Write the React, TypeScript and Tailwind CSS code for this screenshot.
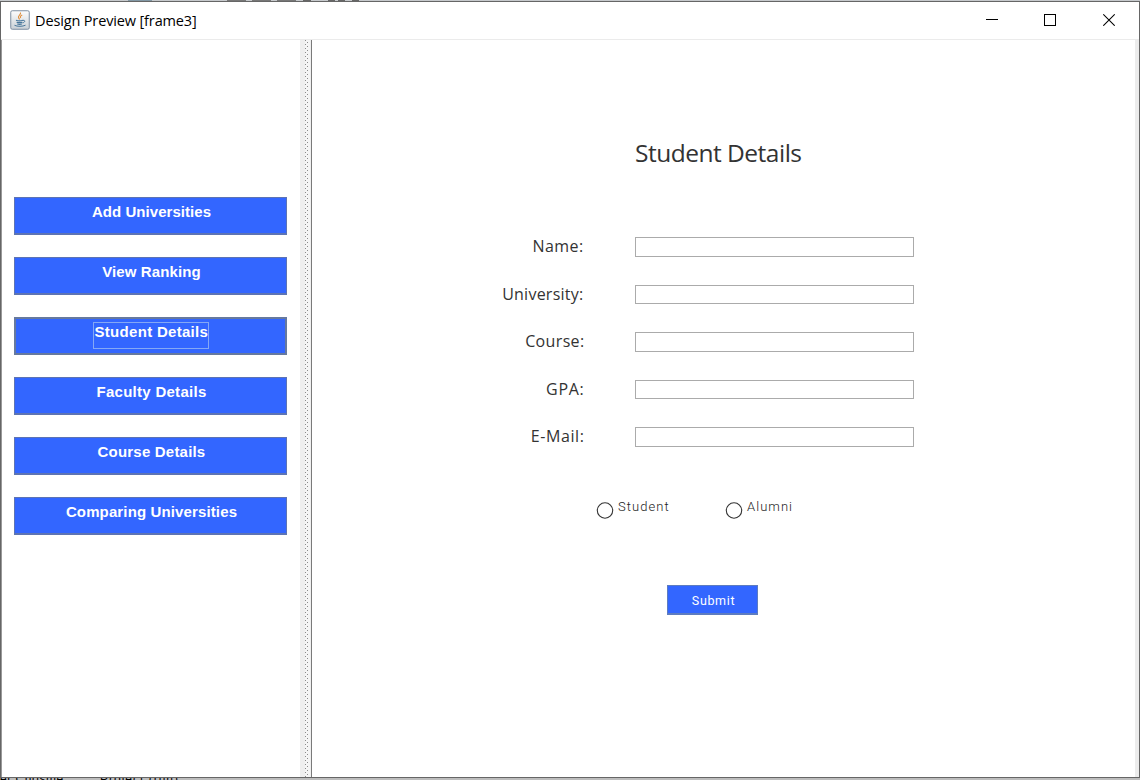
import React from "react";

type NavItem = { label: string; tracking: string; focused?: boolean };

const navItems: NavItem[] = [
  { label: "Add Universities", tracking: "tracking-[0.05px]" },
  { label: "View Ranking", tracking: "tracking-[0.12px]" },
  { label: "Student Details", tracking: "tracking-[0.3px]", focused: true },
  { label: "Faculty Details", tracking: "tracking-[0.28px]" },
  { label: "Course Details", tracking: "tracking-[0.2px]" },
  { label: "Comparing Universities", tracking: "tracking-[0.13px]" },
];

const fields = [
  { label: "Name:", height: "h-5", pad: "pr-[51.5px]", tracking: "tracking-[0.4px]" },
  { label: "University:", height: "h-[19px]", pad: "pr-[51.5px]", tracking: "tracking-[0.25px]" },
  { label: "Course:", height: "h-5", pad: "pr-[50.5px]", tracking: "tracking-[0.35px]" },
  { label: "GPA:", height: "h-[19px]", pad: "pr-[50.5px]", tracking: "tracking-[0.7px]" },
  { label: "E-Mail:", height: "h-5", pad: "pr-[50.5px]", tracking: "tracking-[0.6px]" },
];

function JavaIcon() {
  return (
    <svg width="20" height="20" viewBox="0 0 20 20" fill="none">
      <defs>
        <linearGradient id="tile" x1="0" y1="0" x2="0" y2="1">
          <stop offset="0" stopColor="#fdfdfd" />
          <stop offset="1" stopColor="#c9d0d6" />
        </linearGradient>
      </defs>
      <rect x="0.75" y="0.75" width="18.5" height="18.5" rx="1.5" fill="url(#tile)" stroke="#7d8ea1" />
      <path d="M10.4 2.5c1.2 2-2.8 3-1.9 5 .3.8 1 1.200 1 2M12.200 5c-1.600.8-2.400 1.700-1.500 3" stroke="#e0903f" strokeWidth="1.100" />
      <path d="M6 10.200c2 .7 5 .7 7 0M6.600 12.200c2 .6 4.200.6 5.800 0M7.200 14c1.600.5 3.400.5 4.600 0" stroke="#47769b" strokeWidth="1.200" />
      <path d="M13 10.300c2.600-.3 2.200 2-.4 2.600M4.500 15.300c2.800 1.400 8.200 1.300 11-.1" stroke="#47769b" strokeWidth="1" />
    </svg>
  );
}

function TitleBar() {
  return (
    <header className="flex h-[38px] shrink-0 items-center border-b border-[#ebebeb] bg-white">
      <span className="-mt-px ml-[9px]">
        <JavaIcon />
      </span>
      <h1 className="mt-px ml-[5px] font-['Open_Sans','Noto_Sans',sans-serif] text-[14.5px] tracking-[-0.14px] whitespace-nowrap text-black">
        Design Preview [frame3]
      </h1>
      <div className="-mt-[2px] mr-[24px] ml-auto flex items-center">
        <svg width="13" height="13" viewBox="0 0 13 13" shapeRendering="crispEdges">
          <path d="M0 6.500h12" stroke="#000" />
        </svg>
        <svg className="ml-[45px]" width="12" height="13" viewBox="0 0 12 13" shapeRendering="crispEdges">
          <rect x="0.5" y="1.500" width="11" height="11" fill="none" stroke="#000" />
        </svg>
        <svg className="ml-[47px]" width="12" height="13" viewBox="0 0 12 13">
          <path d="M.3 1.300l11.400 11.400M11.700 1.300L.3 12.700" stroke="#000" strokeWidth="1.100" />
        </svg>
      </div>
    </header>
  );
}

function NavButton({ item }: { item: NavItem }) {
  return (
    <button
      className={
        item.focused
          ? "flex h-[38px] w-[273px] items-start justify-center border-2 border-[#66799f] bg-[#3366ff] pt-[3px]"
          : "flex h-[38px] w-[273px] items-start justify-center border border-b-2 border-[#5d74b4] bg-[#3366ff] pt-1 pl-[2px]"
      }
    >
      <span
        className={`flex h-[27px] items-start border font-['Liberation_Sans',sans-serif] text-[15px] leading-[18px] font-bold whitespace-nowrap text-white ${item.tracking} ${
          item.focused ? "w-[116px] justify-start border-[#85a8f5] pl-[1px]" : "justify-center border-transparent"
        }`}
      >
        {item.label}
      </span>
    </button>
  );
}

function Divider() {
  return (
    <div className="flex w-3 shrink-0 border-r border-[#7a7a7a] bg-[#efefef]">
      <svg className="ml-[5px] h-full w-[5px]" shapeRendering="crispEdges">
        <defs>
          <pattern id="grip" width="5" height="4" patternUnits="userSpaceOnUse">
            <rect width="5" height="4" fill="#f5f5f5" />
            <rect x="0" y="0" width="1" height="1" fill="#8c8c8c" />
            <rect x="2" y="2" width="1" height="1" fill="#8c8c8c" />
          </pattern>
        </defs>
        <rect width="5" height="100%" fill="url(#grip)" />
      </svg>
    </div>
  );
}

function RadioOption({ label }: { label: string }) {
  return (
    <label className="flex items-start">
      <svg className="mt-[3px]" width="18" height="18" viewBox="0 0 18 18">
        <circle cx="9" cy="9.500" r="7.700" fill="#fff" stroke="#333" strokeWidth="1.100" />
      </svg>
      <span className="ml-1 font-['Roboto',sans-serif] text-[13px] leading-[18px] font-light tracking-[1.05px] text-[#222]">
        {label}
      </span>
    </label>
  );
}

export default function App() {
  return (
    <div className="flex h-[780px] w-[1140px] flex-col overflow-hidden bg-[#c8c8c8]">
      <div className="flex h-px shrink-0 bg-[#c6c9cc]">
        <div className="ml-[128px] w-6 bg-[#8298a5]" />
        <div className="ml-[75px] w-[19px] bg-[#777]" />
        <div className="ml-[6px] w-[19px] bg-[#777]" />
        <div className="ml-[6px] w-[19px] bg-[#777]" />
        <div className="ml-[7px] w-[8px] bg-[#666]" />
        <div className="ml-[17px] w-[7px] bg-[#666]" />
        <div className="ml-[3px] w-[7px] bg-[#666]" />
        <div className="ml-[7px] w-[7px] bg-[#666]" />
      </div>
      <main className="flex h-[777px] shrink-0 flex-col border-x border-y border-[#666]">
        <TitleBar />
        <div className="flex min-h-0 grow border-l border-[#999] bg-white">
          <nav className="flex w-[298px] shrink-0 flex-col gap-[22px] pt-[157px] pl-3">
            {navItems.map((item) => (
              <NavButton key={item.label} item={item} />
            ))}
          </nav>
          <Divider />
          <section className="flex grow flex-col font-['Open_Sans','Noto_Sans',sans-serif] text-[#333]">
            <h2 className="mt-[96px] ml-[323px] h-9 text-[24.5px] leading-[34px] tracking-[-0.5px] whitespace-nowrap">
              Student Details
            </h2>
            <form className="flex flex-col">
              <div className="mt-[65px] flex flex-col gap-7">
                {fields.map((field) => (
                  <div key={field.label} className={`flex items-center ${field.height}`}>
                    <label className={`-mt-[2px] w-[323px] text-right text-[16px] leading-5 ${field.tracking} ${field.pad}`}>
                      {field.label}
                    </label>
                    <input className="h-full w-[279px] border border-[#ababab] bg-white" />
                  </div>
                ))}
              </div>
              <div className="mt-[51px] ml-[284px] flex">
                <div className="w-[129px]">
                  <RadioOption label="Student" />
                </div>
                <RadioOption label="Alumni" />
              </div>
              <button className="mt-[66px] ml-[355px] h-[30px] w-[91px] border border-b-2 border-[#5d7cc0] bg-[#3366ff] pt-1 pl-[2px] font-['Roboto',sans-serif] text-[12.5px] tracking-[0.65px] text-white">
                Submit
              </button>
            </form>
          </section>
          <div className="w-1 shrink-0 bg-[#ececec]" />
        </div>
      </main>
      <div className="flex h-[2px] shrink-0 items-center overflow-hidden bg-[#bdbdbd] font-['Liberation_Sans',sans-serif] text-[12px] leading-[6px] text-black">
        <span className="w-[100px] tracking-[0.5px] whitespace-nowrap">er Chrisme</span>
        <span className="tracking-[1px] whitespace-nowrap">Project (run)</span>
      </div>
    </div>
  );
}
